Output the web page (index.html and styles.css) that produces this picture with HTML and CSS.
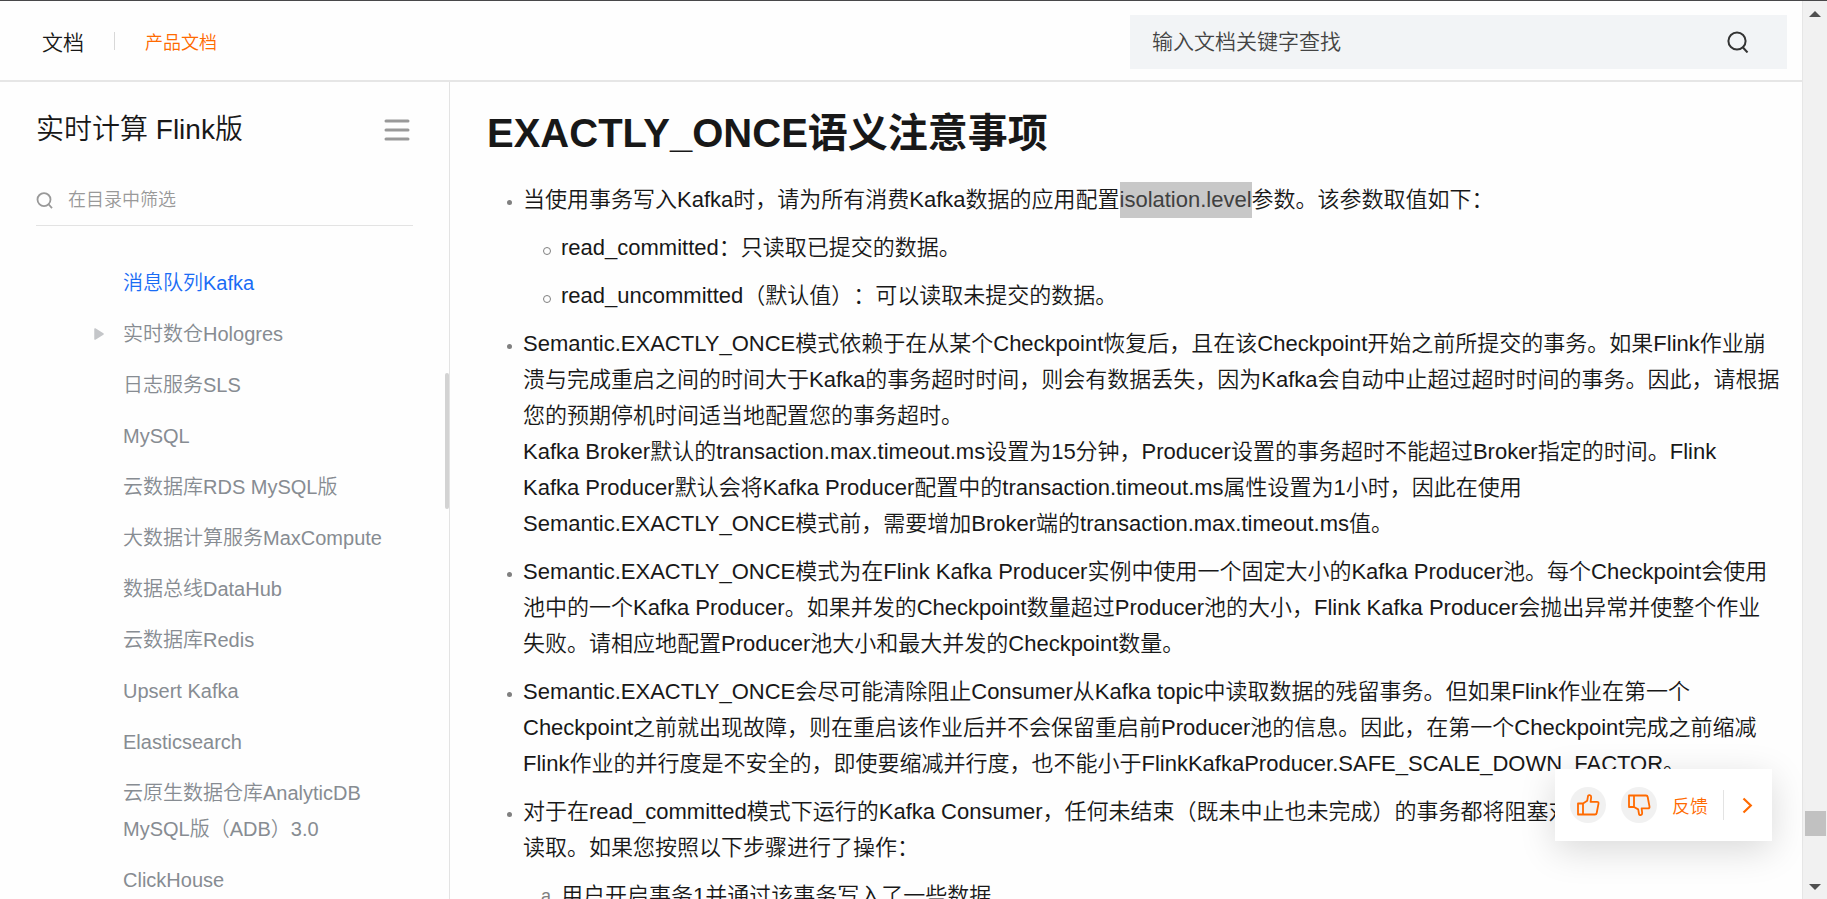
FILE: index.html
```
<!DOCTYPE html>
<html lang="zh-CN">
<head>
<meta charset="utf-8">
<title>EXACTLY_ONCE语义注意事项</title>
<link rel="stylesheet" href="styles.css">
</head>
<body>
<div class="window">
  <div class="page">
    <header class="topbar">
      <nav class="crumbs">
        <a class="crumb-home" href="#">文档</a>
        <span class="crumb-sep"></span>
        <a class="crumb-product" href="#">产品文档</a>
      </nav>
      <form class="search">
        <input class="search-input" type="text" aria-label="输入文档关键字查找" placeholder="输入文档关键字查找">
        <button class="search-button" type="button" aria-label="搜索">
          <svg width="22" height="22" viewBox="0 0 22 22" fill="none" stroke="#333" stroke-width="2"><circle cx="10" cy="10" r="8.6"/><path d="M15.5 16 20.5 21.5"/></svg>
        </button>
      </form>
    </header>
    <div class="columns">
      <aside class="sidebar">
        <div class="sidebar-head">
          <h2 class="sidebar-title">实时计算 Flink版</h2>
          <button class="menu-button" type="button" aria-label="目录">
            <svg width="26" height="22" viewBox="0 0 26 22" stroke="#999" stroke-width="3" stroke-linecap="round"><path d="M2 2H24M2 11H24M2 20H24"/></svg>
          </button>
        </div>
        <div class="filter">
          <svg width="17" height="17" viewBox="0 0 17 17" fill="none" stroke="#999" stroke-width="1.8"><circle cx="8" cy="7.6" r="6.5"/><path d="M12.3 12 16 16.2"/></svg>
          <input class="filter-input" type="text" aria-label="在目录中筛选" placeholder="在目录中筛选">
        </div>
        <ul class="toc">
          <li><a class="current" href="#">消息队列Kafka</a></li>
          <li class="branch"><svg class="caret" width="10" height="12" viewBox="0 0 10 12"><path d="M1 1 9 6 1 11Z" fill="#c4c6c9" stroke="#c4c6c9" stroke-width="1.5" stroke-linejoin="round"/></svg><a href="#">实时数仓Hologres</a></li>
          <li><a href="#">日志服务SLS</a></li>
          <li><a href="#">MySQL</a></li>
          <li><a href="#">云数据库RDS MySQL版</a></li>
          <li><a href="#">大数据计算服务MaxCompute</a></li>
          <li><a href="#">数据总线DataHub</a></li>
          <li><a href="#">云数据库Redis</a></li>
          <li><a href="#">Upsert Kafka</a></li>
          <li><a href="#">Elasticsearch</a></li>
          <li><a href="#">云原生数据仓库AnalyticDB MySQL版（ADB）3.0</a></li>
          <li><a href="#">ClickHouse</a></li>
        </ul>
        <span class="sidebar-thumb"></span>
      </aside>
      <main class="article">
        <h1 class="heading">EXACTLY_ONCE语义注意事项</h1>
        <ul class="notes">
          <li>当使用事务写入Kafka时，请为所有消费Kafka数据的应用配置<mark class="selected">isolation.level</mark>参数。该参数取值如下：
            <ul class="values">
              <li>read_committed：只读取已提交的数据。</li>
              <li>read_uncommitted（默认值）：可以读取未提交的数据。</li>
            </ul>
          </li>
          <li>Semantic.EXACTLY_ONCE模式依赖于在从某个Checkpoint恢复后，且在该Checkpoint开始之前所提交的事务。如果Flink作业崩<br>溃与完成重启之间的时间大于Kafka的事务超时时间，则会有数据丢失，因为Kafka会自动中止超过超时时间的事务。因此，请根据<br>您的预期停机时间适当地配置您的事务超时。<br>Kafka Broker默认的transaction.max.timeout.ms设置为15分钟，Producer设置的事务超时不能超过Broker指定的时间。Flink<br>Kafka Producer默认会将Kafka Producer配置中的transaction.timeout.ms属性设置为1小时，因此在使用<br>Semantic.EXACTLY_ONCE模式前，需要增加Broker端的transaction.max.timeout.ms值。</li>
          <li>Semantic.EXACTLY_ONCE模式为在Flink Kafka Producer实例中使用一个固定大小的Kafka Producer池。每个Checkpoint会使用<br>池中的一个Kafka Producer。如果并发的Checkpoint数量超过Producer池的大小，Flink Kafka Producer会抛出异常并使整个作业<br>失败。请相应地配置Producer池大小和最大并发的Checkpoint数量。</li>
          <li>Semantic.EXACTLY_ONCE会尽可能清除阻止Consumer从Kafka topic中读取数据的残留事务。但如果Flink作业在第一个<br>Checkpoint之前就出现故障，则在重启该作业后并不会保留重启前Producer池的信息。因此，在第一个Checkpoint完成之前缩减<br>Flink作业的并行度是不安全的，即使要缩减并行度，也不能小于FlinkKafkaProducer.SAFE_SCALE_DOWN_FACTOR。</li>
          <li>对于在read_committed模式下运行的Kafka Consumer，任何未结束（既未中止也未完成）的事务都将阻塞对<br>读取。如果您按照以下步骤进行了操作：
            <ol class="steps">
              <li>用户开启事务1并通过该事务写入了一些数据</li>
            </ol>
          </li>
        </ul>
      </main>
    </div>
    <div class="feedback">
      <button class="round" type="button" aria-label="赞">
        <svg width="24" height="24" viewBox="0 0 24 24" fill="none" stroke="#ff6a00" stroke-width="1.8" stroke-linejoin="round"><path d="M2 10.5H7V21.5H2ZM7 10.5 11.2 7.8 12 3.2C12.3 1.6 15.3 1.8 15.2 4.2L14.6 8.8H21C22.3 8.8 22.7 9.6 22.5 10.6L20.7 20C20.5 21.1 20 21.5 19 21.5H7"/></svg>
      </button>
      <button class="round" type="button" aria-label="踩">
        <svg width="24" height="24" viewBox="0 0 24 24" fill="none" stroke="#ff6a00" stroke-width="1.8" stroke-linejoin="round"><path d="M2 2.5H7V14H2ZM7 14 11.2 16.4 12 21C12.3 22.7 15.3 22.4 15.2 20L14.6 15.4H21C22.3 15.4 22.7 14.6 22.5 13.6L20.7 4C20.5 2.9 20 2.5 19 2.5H7"/></svg>
      </button>
      <a class="feedback-link" href="#">反馈</a>
      <button class="collapse" type="button" aria-label="收起">
        <svg width="11" height="17" viewBox="0 0 11 17" fill="none" stroke="#ff6a00" stroke-width="2.2"><path d="M1.5 1.5 8.8 8.5 1.5 15.5"/></svg>
      </button>
    </div>
  </div>
  <div class="scrollbar">
    <svg width="12" height="6" viewBox="0 0 12 6"><path d="M0 6 6 0 12 6Z" fill="#505050"/></svg>
    <span class="scroll-thumb"></span>
    <svg width="12" height="6" viewBox="0 0 12 6"><path d="M0 0 6 6 12 0Z" fill="#505050"/></svg>
  </div>
</div>
</body>
</html>
```

FILE: styles.css
```
* {
  box-sizing: border-box;
}

body {
  margin: 0;
  background: #fefefe;
  color: #181818;
  font-family: "Liberation Sans", "Noto Sans CJK SC", sans-serif;
  font-weight: 350;
  text-spacing-trim: space-all;
}

a {
  color: inherit;
  text-decoration: none;
}

button {
  padding: 0;
  border: 0;
  background: none;
  display: flex;
  align-items: center;
  justify-content: center;
}

input {
  border: 0;
  padding: 0;
  outline: 0;
  background: none;
  font: inherit;
  min-width: 0;
  flex: 1;
}

ul,
ol {
  margin: 0;
  padding: 0;
  list-style: none;
}

.window {
  display: flex;
  height: 100vh;
  overflow: hidden;
  border-top: 1px solid #48484a;
}

.page {
  position: relative;
  flex: 1;
  min-width: 0;
  display: flex;
  flex-direction: column;
}

.topbar {
  flex: none;
  display: flex;
  align-items: center;
  justify-content: space-between;
  padding: 14px 15px 11px 42px;
  border-bottom: 2px solid #e6e6e6;
}

.crumbs {
  display: flex;
  align-items: center;
  gap: 30px;
  padding-bottom: 3px;
}

.crumb-home {
  font-size: 21px;
}

.crumb-sep {
  width: 1px;
  height: 18px;
  background: #d8d8d8;
}

.crumb-product {
  font-size: 18px;
  color: #ff6a00;
}

.search {
  width: 657px;
  height: 54px;
  display: flex;
  align-items: center;
  padding: 0 38px 0 22px;
  background: #f2f4f6;
}

.search-input {
  font-size: 21px;
}

.search-input::placeholder {
  color: #444;
}

.columns {
  flex: 1;
  min-height: 0;
  display: flex;
}

.sidebar {
  position: relative;
  flex: none;
  width: 450px;
  padding: 28px 36px 0;
  border-right: 1px solid #e3e3e3;
  overflow: hidden;
}

.sidebar-head {
  display: flex;
  align-items: center;
  justify-content: space-between;
  padding-right: 3px;
}

.sidebar-title {
  margin: 0;
  font-size: 28px;
  line-height: 40px;
  font-weight: 350;
}

.filter {
  display: flex;
  align-items: center;
  gap: 15px;
  height: 51px;
  margin-top: 25px;
  border-bottom: 1px solid #e3e3e3;
}

.filter-input {
  font-size: 18px;
}

.filter-input::placeholder {
  color: #999;
}

.toc {
  display: flex;
  flex-direction: column;
  gap: 15px;
  padding: 39px 20px 0 87px;
  font-size: 20px;
  line-height: 36px;
  color: #878c92;
}

.current {
  color: #1a6cf5;
}

.branch {
  display: flex;
  align-items: center;
  gap: 19px;
  margin-left: -29px;
}

.sidebar-thumb {
  position: absolute;
  right: 0;
  top: 291px;
  width: 4px;
  height: 136px;
  border-radius: 2px;
  background: #d3d3d3;
}

.article {
  flex: 1;
  min-width: 0;
  padding: 23px 15px 0 37px;
  overflow: hidden;
}

.heading {
  margin: 0;
  font-size: 40px;
  line-height: 56px;
  font-weight: 700;
}

.notes {
  padding: 21px 0 0 36px;
  font-size: 22px;
  line-height: 36px;
}

.notes > li {
  position: relative;
  margin-bottom: 12px;
}

.notes > li::before {
  content: "";
  position: absolute;
  left: -16px;
  top: 18px;
  width: 5px;
  height: 5px;
  border-radius: 50%;
  background: #808080;
}

.selected {
  display: inline-block;
  background: #c8c8c8;
  color: #404040;
}

.values,
.steps {
  padding-left: 38px;
}

.values li,
.steps li {
  position: relative;
  margin-top: 12px;
}

.values li::before {
  content: "";
  position: absolute;
  left: -18px;
  top: 17px;
  width: 6px;
  height: 6px;
  border: 1px solid #808080;
  border-radius: 50%;
}

.steps {
  counter-reset: step;
}

.steps li::before {
  counter-increment: step;
  content: counter(step, lower-alpha) ".";
  position: absolute;
  left: -20px;
  font-size: 18px;
  color: #808080;
}

.feedback {
  position: absolute;
  right: 30px;
  bottom: 58px;
  height: 72px;
  display: flex;
  align-items: center;
  gap: 15px;
  padding: 0 15px;
  background: #fff;
  box-shadow: 0 9px 36px rgba(0, 0, 0, 0.15);
}

.round {
  width: 36px;
  height: 36px;
  border-radius: 50%;
  background: #f1f1f1;
}

.feedback-link {
  font-size: 18px;
  color: #ff6a00;
}

.collapse {
  width: 34px;
  height: 30px;
  padding-left: 14px;
  border-left: 1px solid #e3e3e3;
}

.scrollbar {
  flex: none;
  width: 25px;
  display: flex;
  flex-direction: column;
  align-items: center;
  padding: 10px 0 9px;
  background: #f1f1f1;
  border-left: 1px solid #e6e6e6;
}

.scroll-thumb {
  width: 21px;
  height: 25px;
  margin: auto 0 48px;
  background: #c1c1c1;
}
```
